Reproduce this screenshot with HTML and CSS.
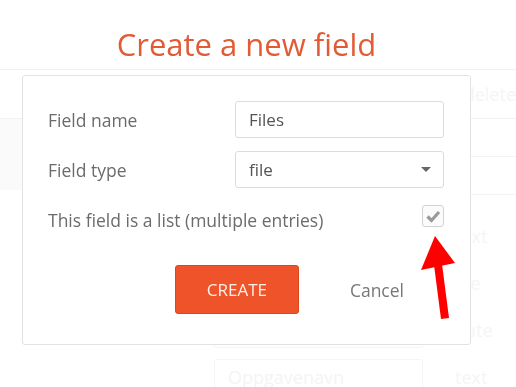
FILE: index.html
```html
<!DOCTYPE html>
<html lang="en">
<head>
    <meta charset="UTF-8">
    <meta name="viewport" content="width=device-width, initial-scale=1.0">
    <title>Create a new field</title>
    <link rel="stylesheet" href="styles.css">
</head>
<body>
    <!-- page behind the dialog, faded out -->
    <div class="page">
        <div class="page-bar"></div>
        <div class="page-row head">
            <span class="page-cell wide"></span>
            <span class="page-type">delete</span>
        </div>
        <div class="page-split">
            <div class="page-side"></div>
            <div class="page-lines">
                <div class="page-line"></div>
                <div class="page-line"></div>
            </div>
        </div>
        <div class="page-row field">
            <span class="page-input"></span>
            <span class="page-type">text</span>
        </div>
        <div class="page-row field">
            <span class="page-input"></span>
            <span class="page-type">file</span>
        </div>
        <div class="page-row field">
            <span class="page-input"></span>
            <span class="page-type">date</span>
        </div>
        <div class="page-row field">
            <span class="page-input">Oppgavenavn</span>
            <span class="page-type">text</span>
        </div>
    </div>

    <div class="dialog-layer">
        <h1 class="dialog-title">Create a new field</h1>
        <div class="dialog">
            <div class="form-grid">
                <label for="fieldName">Field name</label>
                <input type="text" id="fieldName" class="text-input" value="Files">

                <label for="fieldType">Field type</label>
                <div class="select-box" id="fieldType">
                    <span>file</span>
                    <span class="caret"></span>
                </div>

                <label for="isList" class="list-label">This field is a list (multiple entries)</label>
                <div class="check-cell">
                    <span class="checkbox" id="isList">
                        <svg width="20" height="20" viewBox="0 0 20 20">
                            <path d="M4.5 10.5 L8.5 14.5 L16 6" fill="none" stroke="#9a9a9a" stroke-width="3.2" stroke-linejoin="miter"/>
                        </svg>
                    </span>
                </div>
            </div>

            <div class="actions">
                <button class="btn-create">CREATE</button>
                <button class="btn-cancel">Cancel</button>
            </div>
        </div>

        <svg class="pointer-arrow" width="45" height="95" viewBox="0 0 45 95">
            <polygon points="20,6 6,40 40,33" fill="#ff0000"/>
            <polygon points="19,35 27,34 34,88 26,89" fill="#ff0000"/>
        </svg>
    </div>
</body>
</html>
```

FILE: styles.css
```css
html, body {
    margin: 0;
    padding: 0;
    height: 100%;
    overflow: hidden;
}

body {
    font-family: 'Open Sans', 'Noto Sans', sans-serif;
    background-color: #fff;
    color: #666;
}

/* faded page behind the dialog */
.page {
    color: #f5f5f5;
    font-size: 18px;
}

.page-bar {
    height: 69px;
    border-bottom: 1px solid #f1f1f1;
}

.page-row {
    display: flex;
    align-items: center;
}

.page-row.head {
    height: 48px;
    border-bottom: 1px solid #f2f2f2;
}

.page-cell.wide {
    width: 472px;
}

.page-split {
    display: flex;
    height: 93px;
}

.page-side {
    width: 22px;
    height: 71px;
    background-color: #fafafa;
}

.page-lines {
    flex: 1;
    display: flex;
    flex-direction: column;
}

.page-line {
    height: 37px;
    border-bottom: 1px solid #f3f3f3;
}

.page-row.field {
    height: 47px;
    padding-left: 214px;
    gap: 32px;
}

.page-input {
    box-sizing: border-box;
    width: 209px;
    height: 36px;
    border: 1px solid #f5f5f5;
    border-radius: 3px;
    padding: 4px 13px;
    line-height: 26px;
    color: #f4f4f4;
}

/* dialog */
.dialog-layer {
    position: fixed;
    top: 0;
    left: 0;
    right: 0;
    bottom: 0;
    padding: 23px 0 0 22px;
}

.dialog-title {
    width: 449px;
    margin: 0 0 10px;
    text-align: center;
    font-weight: 400;
    font-size: 31px;
    line-height: 42px;
    color: #e25b35;
}

.dialog {
    box-sizing: border-box;
    width: 449px;
    height: 270px;
    background-color: #fff;
    border: 1px solid #e2e2e2;
    border-radius: 3px;
    padding: 25px 26px 0 25px;
}

.form-grid {
    display: grid;
    grid-template-columns: 187px 209px;
    grid-template-rows: 37px 37px 32px;
    row-gap: 13px;
    align-items: center;
}

.form-grid label {
    font-size: 17.5px;
    color: #6b6b6b;
    white-space: nowrap;
}

.form-grid .list-label {
    padding-top: 5px;
}

.text-input,
.select-box {
    box-sizing: border-box;
    width: 209px;
    height: 37px;
    border: 1px solid #dcdcdc;
    border-radius: 3px;
    padding: 0 13px;
    font-family: inherit;
    font-size: 17px;
    color: #555;
    background: #fff;
}

.text-input {
    outline: none;
}

.select-box {
    display: flex;
    align-items: center;
    justify-content: space-between;
    padding-right: 12px;
}

.caret {
    width: 0;
    height: 0;
    border-left: 5px solid transparent;
    border-right: 5px solid transparent;
    border-top: 5px solid #666;
}

.check-cell {
    display: flex;
    justify-content: flex-end;
    margin-top: -3px;
}

.checkbox {
    box-sizing: border-box;
    width: 22px;
    height: 22px;
    border: 1px solid #d2d2d2;
    border-radius: 3px;
    display: flex;
    align-items: center;
    justify-content: center;
    background: #fbfbfb;
}

.actions {
    display: flex;
    justify-content: flex-end;
    align-items: center;
    margin-top: 32px;
}

.btn-create {
    width: 124px;
    height: 49px;
    background-color: #ee5329;
    border: 1px solid #d9471f;
    border-radius: 3px;
    color: #fcefe9;
    font-family: inherit;
    font-size: 17px;
    cursor: pointer;
}

.btn-cancel {
    background: none;
    border: none;
    padding: 0 40px 0 51px;
    height: 49px;
    font-family: inherit;
    font-size: 17.5px;
    color: #777;
    cursor: pointer;
}

.pointer-arrow {
    position: absolute;
    left: 415px;
    top: 230px;
}
```
